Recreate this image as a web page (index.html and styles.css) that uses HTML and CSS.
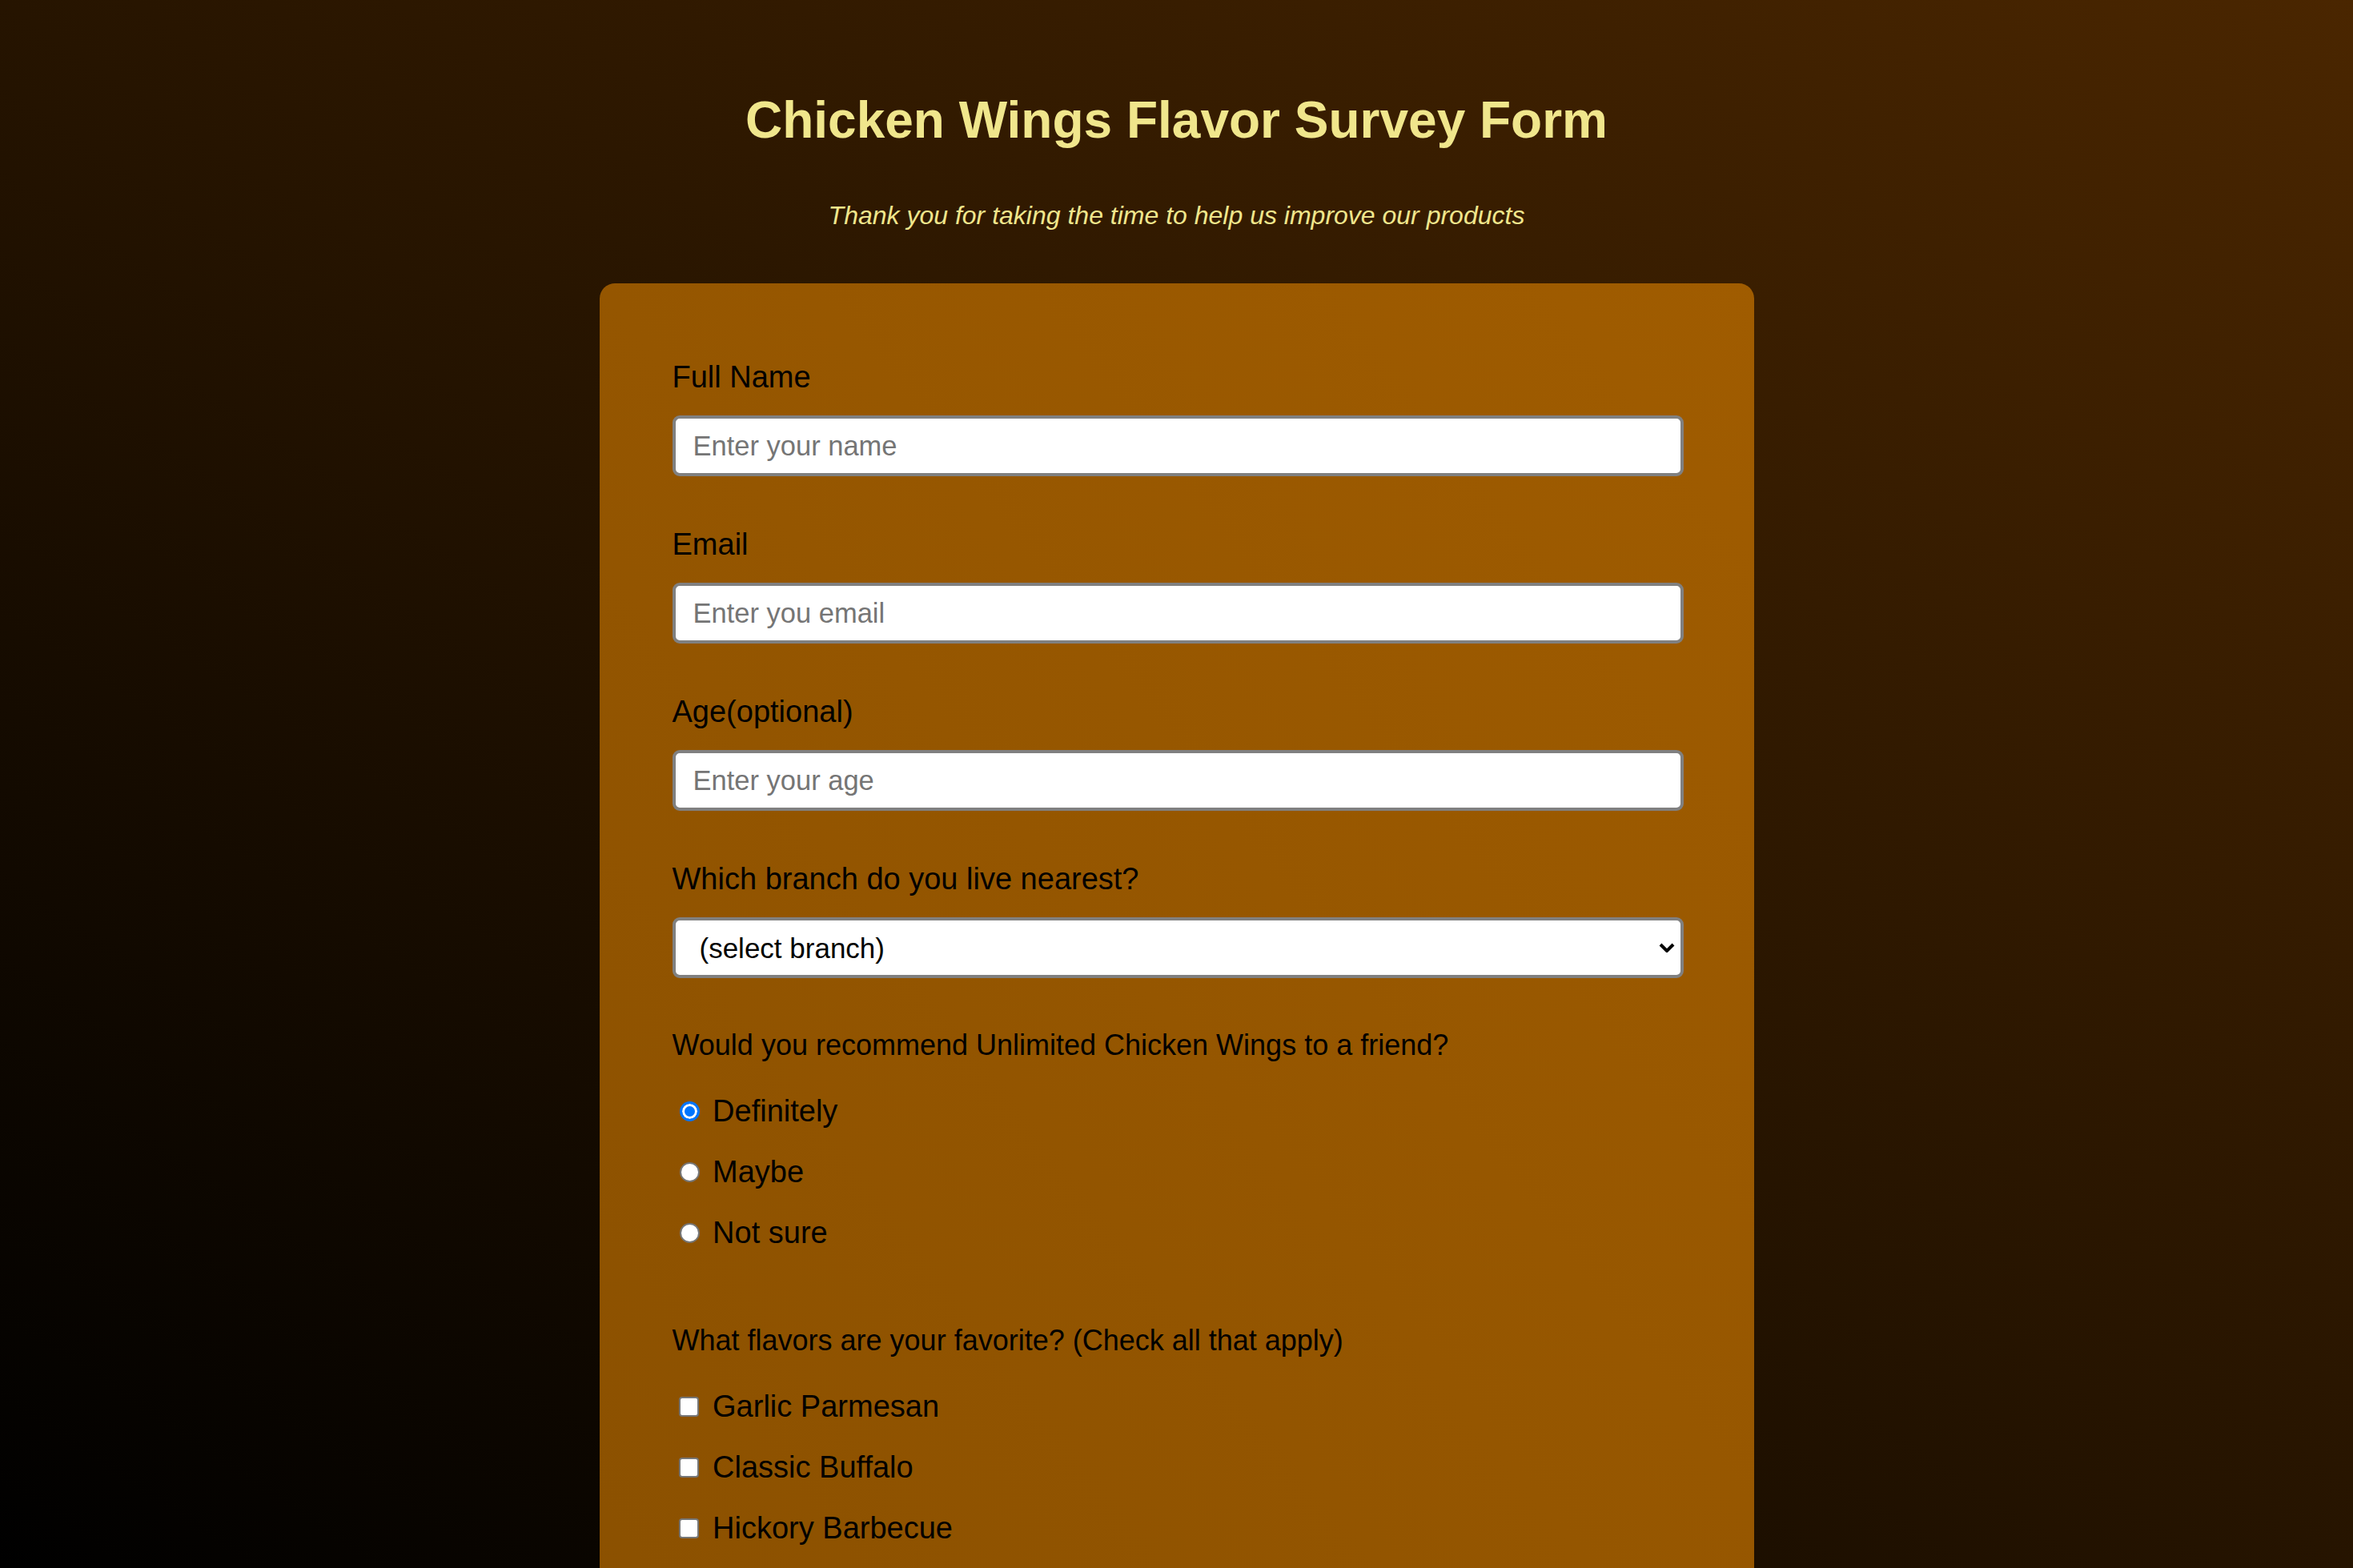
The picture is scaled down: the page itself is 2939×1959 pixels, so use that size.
FILE: index.html
```html
<!DOCTYPE html>
<html lang="en">
<head>
<meta charset="utf-8">
<title>Chicken Wings Flavor Survey Form</title>
<link rel="stylesheet" href="styles.css">
</head>
<body>
<main class="page">
  <h1 class="title">Chicken Wings Flavor Survey Form</h1>
  <p class="subtitle">Thank you for taking the time to help us improve our products</p>

  <form class="survey">
    <div class="field">
      <label class="field-label" for="name">Full Name</label>
      <input class="text-input" id="name" type="text" placeholder="Enter your name">
    </div>
    <div class="field">
      <label class="field-label" for="email">Email</label>
      <input class="text-input" id="email" type="email" placeholder="Enter you email">
    </div>
    <div class="field">
      <label class="field-label" for="age">Age(optional)</label>
      <input class="text-input" id="age" type="number" placeholder="Enter your age">
    </div>
    <div class="field">
      <label class="field-label" for="branch">Which branch do you live nearest?</label>
      <div class="select-wrap">
        <select class="select" id="branch">
          <option>(select branch)</option>
          <option>Downtown</option>
          <option>Uptown</option>
        </select>
        <svg class="chevron" width="20" height="12" viewBox="0 0 20 12" aria-hidden="true">
          <path d="M2 2 L10 10 L18 2" fill="none" stroke="#000" stroke-width="4"/>
        </svg>
      </div>
    </div>

    <div class="group">
      <p class="question">Would you recommend Unlimited Chicken Wings to a friend?</p>
      <label class="choice"><input class="radio" type="radio" name="recommend" checked> Definitely</label>
      <label class="choice"><input class="radio" type="radio" name="recommend"> Maybe</label>
      <label class="choice"><input class="radio" type="radio" name="recommend"> Not sure</label>
    </div>

    <div class="group">
      <p class="question">What flavors are your favorite? (Check all that apply)</p>
      <label class="choice"><input class="check" type="checkbox"> Garlic Parmesan</label>
      <label class="choice"><input class="check" type="checkbox"> Classic Buffalo</label>
      <label class="choice"><input class="check" type="checkbox"> Hickory Barbecue</label>
    </div>
  </form>
</main>
</body>
</html>
```

FILE: styles.css
```css
html {
  height: 100%;
  overflow: hidden;
  background: linear-gradient(to top right, #000000 0%, #261400 50%, #4a2600 100%);
}

body {
  margin: 0;
  height: 100%;
  overflow: hidden;
  font-family: "Liberation Sans", Arial, sans-serif;
  color: #000;
}

.page {
  padding-top: 113px;
}

.title {
  margin: 0;
  font-size: 64px;
  line-height: 74px;
  font-weight: bold;
  color: #f0e68c;
  text-align: center;
}

.subtitle {
  margin: 64px 0 0;
  font-size: 32px;
  line-height: 37px;
  font-style: italic;
  color: #f0e68c;
  text-align: center;
}

.survey {
  box-sizing: border-box;
  width: 1442px;
  margin: 66px auto 0;
  padding: 95px 88px 200px 91px;
  border-radius: 19px;
  background: linear-gradient(to bottom left, #a05c00 0%, #8a5000 100%);
}

.field {
  margin-bottom: 63px;
}

.field-label {
  display: block;
  margin-bottom: 26px;
  font-size: 38px;
  line-height: 44px;
}

.text-input,
.select {
  display: block;
  box-sizing: border-box;
  width: 100%;
  height: 76px;
  margin: 0;
  border: 4px solid #808080;
  border-radius: 9px;
  background: #fff;
  font-family: "Liberation Sans", Arial, sans-serif;
  color: #000;
  outline: none;
}

.text-input {
  padding: 0 22px;
  font-size: 34.5px;
}

.text-input::placeholder {
  color: #757575;
}

.text-input::-webkit-outer-spin-button,
.text-input::-webkit-inner-spin-button {
  -webkit-appearance: none;
  margin: 0;
}

.select-wrap {
  position: relative;
}

.select {
  -webkit-appearance: none;
  appearance: none;
  padding: 0 60px 0 30px;
  font-size: 35px;
}

.chevron {
  position: absolute;
  right: 11px;
  top: 32px;
  pointer-events: none;
}

.group {
  margin-bottom: 92px;
}

.question {
  margin: 0 0 39px;
  font-size: 36px;
  line-height: 42px;
}

.choice {
  display: block;
  margin-bottom: 32px;
  font-size: 38px;
  line-height: 44px;
}

.radio,
.check {
  -webkit-appearance: none;
  appearance: none;
  box-sizing: border-box;
  width: 25px;
  height: 25px;
  border: 2px solid #767676;
  background: #fff;
  vertical-align: baseline;
}

.radio {
  margin: 0 6px 0 9px;
  border-radius: 50%;
}

.radio:checked {
  border: 3px solid #0075ff;
  background: #0075ff;
  box-shadow: inset 0 0 0 3px #fff;
}

.check {
  margin: 0 7px 0 8px;
  border-radius: 4px;
}
```
